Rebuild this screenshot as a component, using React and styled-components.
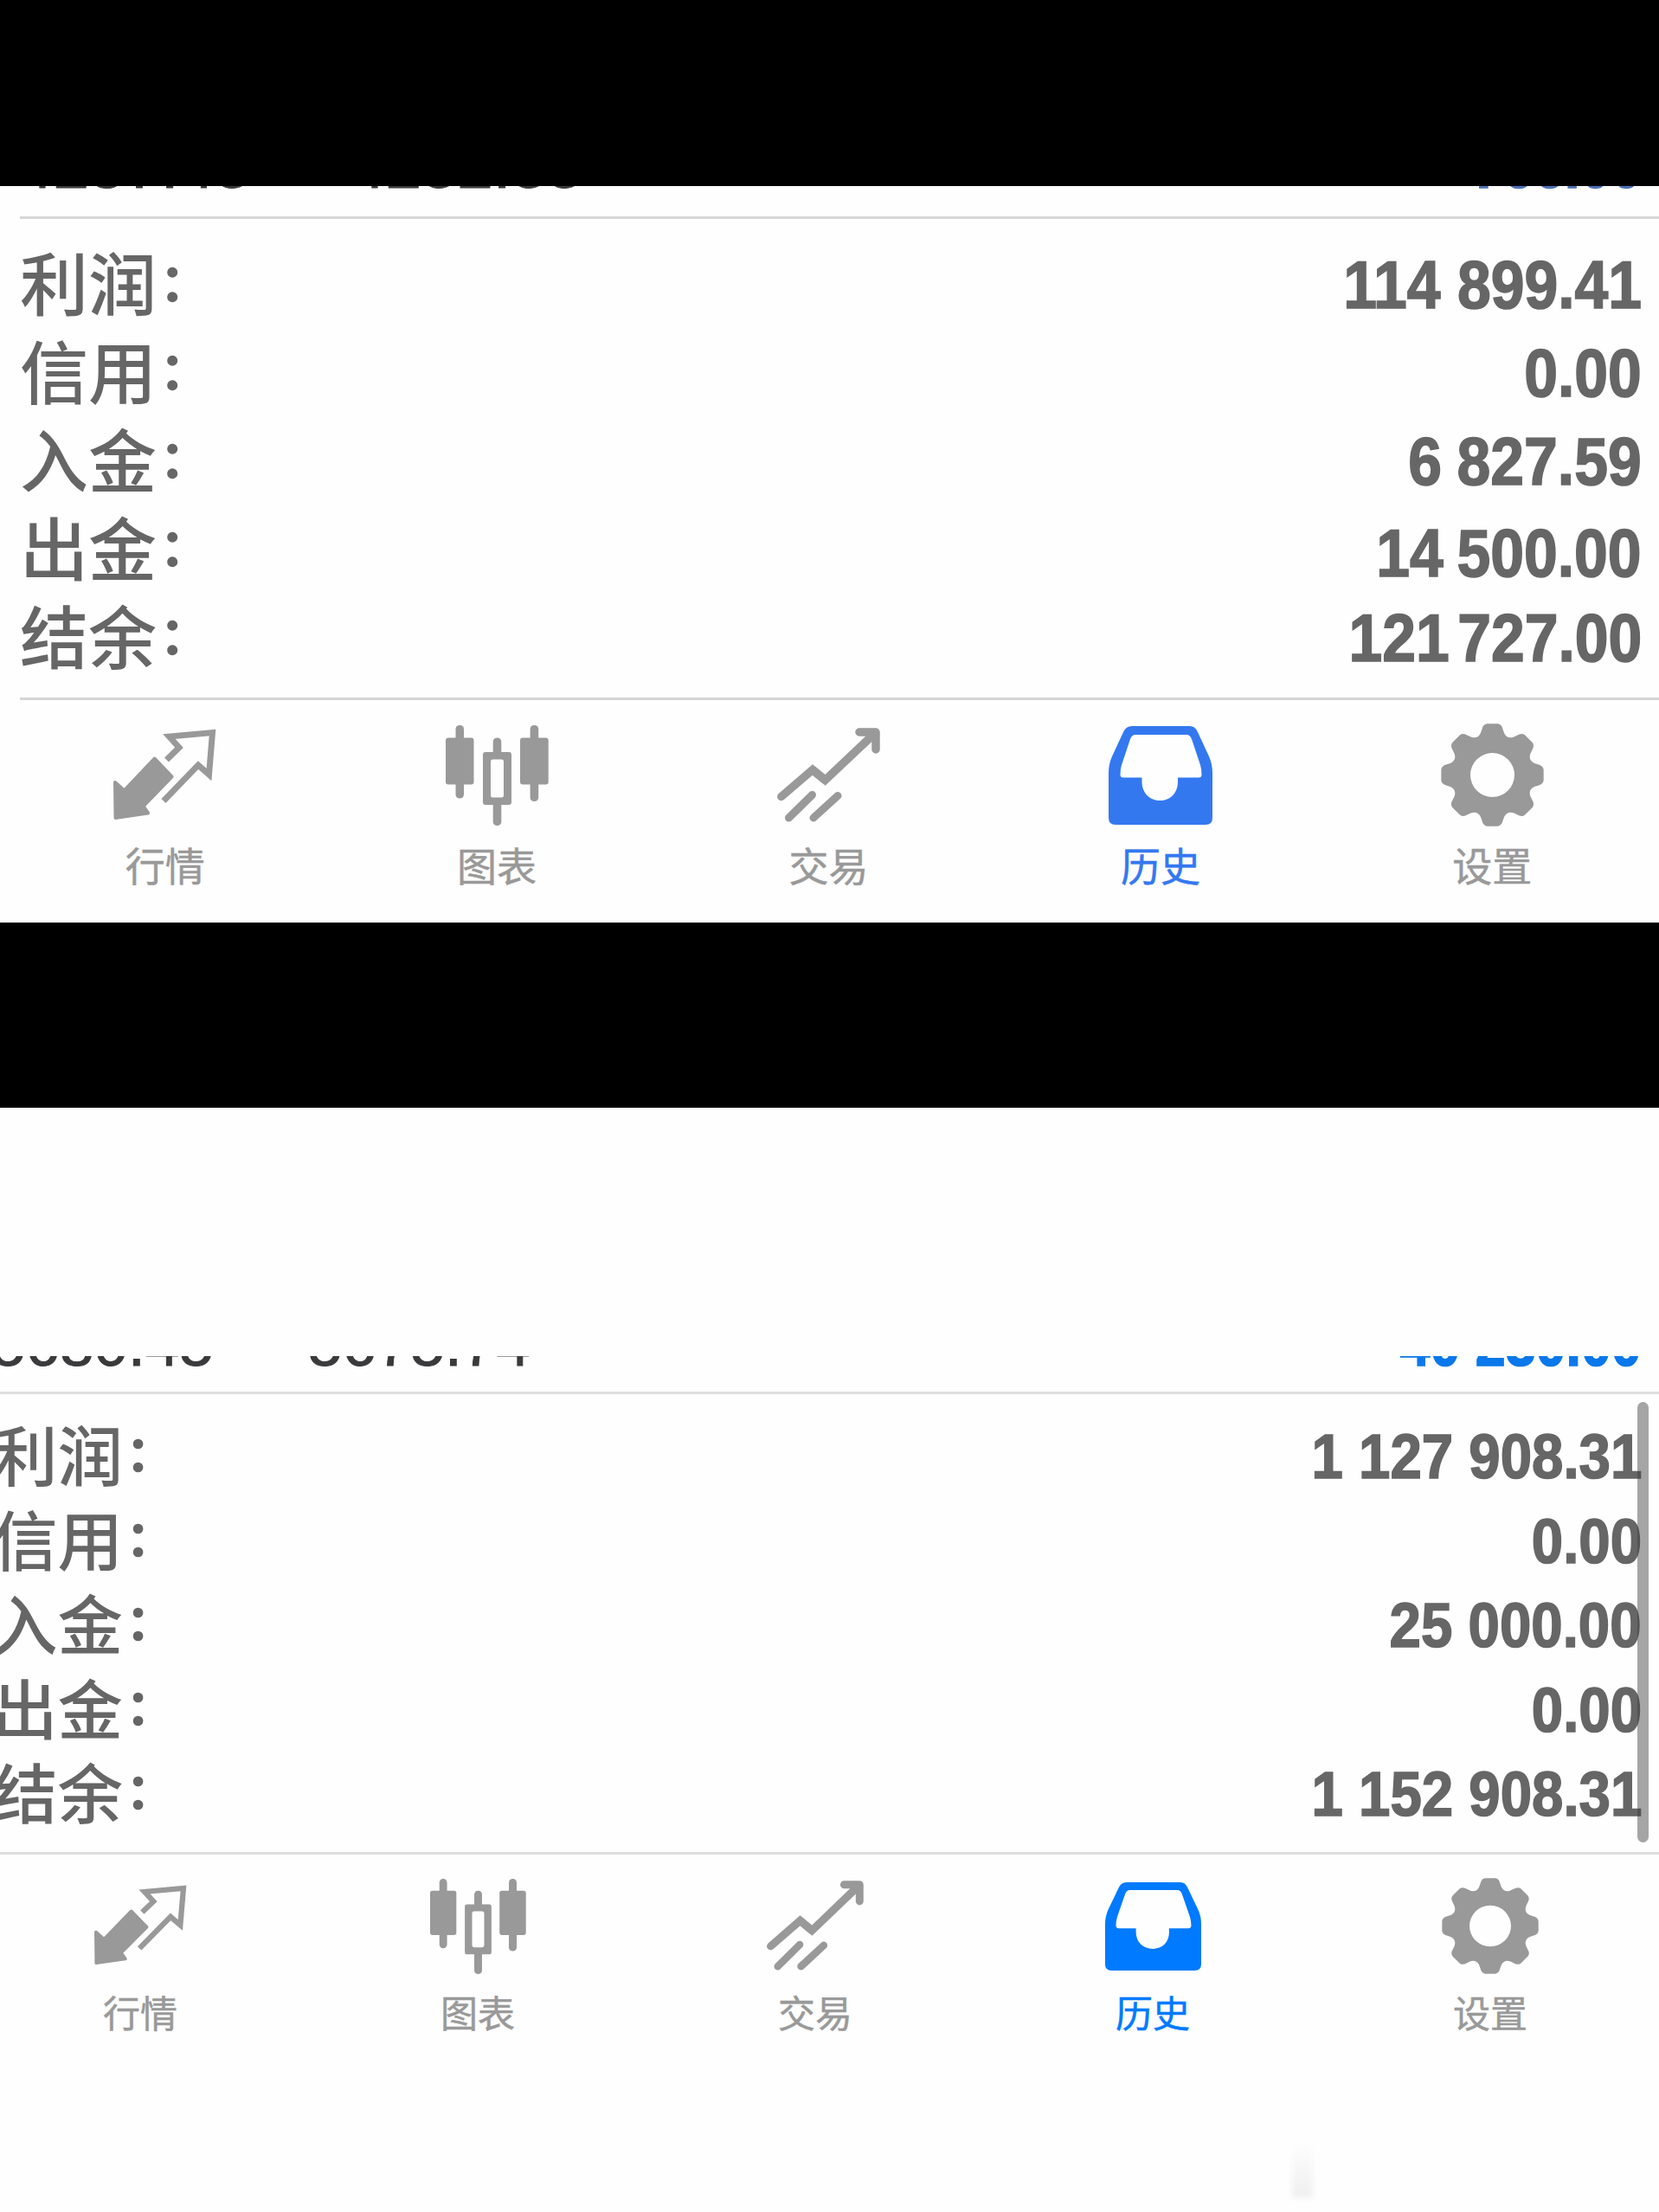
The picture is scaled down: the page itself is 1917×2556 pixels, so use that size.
import React from 'react';
import styled, { createGlobalStyle } from 'styled-components';

const GlobalStyle = createGlobalStyle`
  html, body { margin: 0; padding: 0; background: #000; }
  * { box-sizing: border-box; }
`;

const Page = styled.main`
  width: 1917px;
  height: 2556px;
  overflow: hidden;
  display: flex;
  flex-direction: column;
  background: #000;
  font-family: "Liberation Sans", "Noto Sans CJK SC", sans-serif;
`;

const Bar = styled.div`
  flex: none;
  height: ${(p) => p.$h}px;
  background: #000;
`;

const Panel = styled.section`
  position: relative;
  flex: none;
  height: ${(p) => p.$h}px;
  padding-top: ${(p) => p.$top || 0}px;
  background: #fefefe;
  overflow: hidden;
`;

const Clipped = styled.div`
  height: ${(p) => p.$h}px;
  overflow: hidden;
  display: flex;
  align-items: flex-end;
  justify-content: space-between;
  padding: 0 20px ${(p) => p.$bottom}px 0;
`;

const Prices = styled.div`
  display: flex;
  align-items: flex-end;
  margin-left: ${(p) => p.$left}px;
`;

const Price = styled.span`
  flex: none;
  width: ${(p) => p.$w}px;
  font-size: ${(p) => p.$size}px;
  line-height: 1;
  height: ${(p) => p.$size * 0.846}px;
  display: flex;
  white-space: pre;
  color: #3a3a3c;
  -webkit-text-stroke: 1px #3a3a3c;
`;

const ArrowSlot = styled.span`
  flex: none;
  display: flex;
  width: ${(p) => p.$w}px;
  padding-bottom: 10px;
  color: #3a3a3c;
`;

const Rule = styled.hr`
  height: 3px;
  margin: 0 0 0 ${(p) => p.$left}px;
  border: 0;
  background: ${(p) => p.$color};
`;

const Summary = styled.div`
  display: flex;
  flex-direction: column;
  height: ${(p) => p.$h}px;
  padding: ${(p) => p.$top}px 20px 0 0;
  margin-left: ${(p) => p.$left}px;
`;

const Row = styled.div`
  flex: none;
  display: flex;
  justify-content: space-between;
  height: ${(p) => p.$h}px;
  line-height: ${(p) => p.$h}px;
  color: #666;
`;

const Label = styled.span`
  font-family: "Noto Sans CJK SC", sans-serif;
  font-size: ${(p) => p.$size}px;
  font-weight: 500;
  white-space: nowrap;
`;

const Colon = styled.span`
  display: inline-block;
  margin-left: 4px;
  font-size: 0.72em;
  line-height: 1;
  -webkit-text-stroke: 2.5px #666;
  transform: translateY(-12px);
`;

const Value = styled.span`
  font-size: ${(p) => p.$size}px;
  font-weight: 700;
  white-space: pre;
  color: ${(p) => p.$color || '#666'};
  -webkit-text-stroke: 1.6px ${(p) => p.$color || '#666'};
  word-spacing: ${(p) => p.$ws || 0}px;
  transform: translateY(${(p) => p.$dy || 0}px) scaleX(${(p) => p.$sx});
  transform-origin: right center;
`;

const ClippedValue = styled(Value)`
  line-height: 1;
  height: ${(p) => p.$size * 0.846}px;
`;

const Tabs = styled.nav`
  display: flex;
  width: ${(p) => p.$w}px;
  margin-left: ${(p) => p.$left}px;
`;

const Tab = styled.div`
  flex: 1;
  display: flex;
  flex-direction: column;
  align-items: center;
  color: ${(p) => p.$color};
`;

const IconSlot = styled.div`
  height: ${(p) => p.$h}px;
  display: flex;
  align-items: center;
  justify-content: center;
  padding-bottom: ${(p) => p.$lift || 0}px;
  svg { display: block; overflow: visible; }
`;

const TabLabel = styled.span`
  font-family: "Noto Sans CJK SC", sans-serif;
  font-size: ${(p) => p.$size}px;
  line-height: 60px;
  margin-top: -15px;
  font-weight: 400;
  -webkit-text-stroke: 0.5px currentColor;
`;

const Scrollbar = styled.div`
  position: absolute;
  left: 1892px;
  top: 340px;
  width: 13px;
  height: 509px;
  border-radius: 7px;
  background: rgba(60, 60, 60, 0.46);
`;

const Smudge = styled.div`
  position: absolute;
  left: 1493px;
  top: 1195px;
  width: 24px;
  height: 64px;
  background: linear-gradient(#fefefe, #efefef);
  filter: blur(3px);
`;

const Icon = ({ w, h, vw, vh, children }) => (
  <svg width={w} height={h} viewBox={`0 0 ${vw} ${vh}`} preserveAspectRatio="none" fill="currentColor">
    {children}
  </svg>
);

const line = { fill: 'none', stroke: 'currentColor' };

const QuotesIcon = (p) => (
  <Icon {...p} vw={119} vh={106}>
    <path {...line} strokeWidth="7" strokeLinejoin="miter" d="M61.500 36 L76 21.800 L64.500 9 L114.500 4.500 L110.500 53 L98 42 L58 83.500" />
    <path stroke="currentColor" strokeWidth="4" strokeLinejoin="round" d="M47.500 34.500 L67.500 55.500 L34.500 89.500 L40 97.500 L2.500 103 L2 62 L12.500 71.500 Z" />
  </Icon>
);

const ChartIcon = (p) => (
  <Icon {...p} vw={119} vh={116}>
    <rect x="11.500" y="0" width="9.500" height="84.500" rx="4.500" />
    <rect x="0" y="14.500" width="32.500" height="54" rx="3" />
    <rect x="54.700" y="14.500" width="9.600" height="24" rx="4.500" />
    <rect x="54.700" y="84" width="9.600" height="32" rx="4.500" />
    <path fillRule="evenodd" d="M46 31 H73 Q76 31 76 34 V89 Q76 92 73 92 H46 Q43 92 43 89 V34 Q43 31 46 31 Z M54.500 39.500 Q52 39.500 52 42 V81 Q52 83.500 54.500 83.500 H64.500 Q67 83.500 67 81 V42 Q67 39.500 64.500 39.500 Z" />
    <rect x="97.600" y="0" width="9.600" height="88" rx="4.500" />
    <rect x="86" y="14.500" width="32.700" height="54" rx="3" />
  </Icon>
);

const TradeIcon = (p) => (
  <Icon {...p} vw={119} vh={109}>
    <g {...line} strokeWidth="9.500" strokeLinecap="round">
      <path d="M4.800 79.500 L41 48.500 L55.500 60.500 L111 8" />
      <path strokeLinecap="butt" d="M41 48.500 L55.500 60.500" />
      <path d="M95 5 H114 V25" strokeLinejoin="round" />
      <path d="M40.500 77.500 L13.500 104" strokeWidth="9" />
      <path d="M70 78.500 L42 104" strokeWidth="9" />
    </g>
  </Icon>
);

const HistoryIcon = (p) => (
  <Icon {...p} vw={120} vh={114}>
    <path fillRule="evenodd" d="M27 0 H94 Q100 0 103 7 L116 35 Q120 44 120 54 V106 Q120 114 112 114 H8 Q0 114 0 106 V54 Q0 44 4 35 L17 7 Q20 0 27 0 Z M31 10 Q27 10 25 15 L15 45 Q13.500 50 13.500 56 Q13.500 59.500 17 59.500 H38.500 V64 C38.500 78 48 86 59.500 86 C71 86 80 78 80 64 V59.500 H104 Q107.500 59.500 107.500 56 Q107.500 50 106 45 L96 15 Q94 10 90 10 Z" />
  </Icon>
);

const gearPath = (() => {
  const at = (deg, r) => {
    const t = (deg * Math.PI) / 180;
    return `${(59.5 + r * Math.sin(t)).toFixed(2)} ${(59.5 - r * Math.cos(t)).toFixed(2)}`;
  };
  let d = '';
  for (let i = 0; i < 8; i += 1) {
    const a = i * 45;
    d += `${i ? 'L' : 'M'}${at(a - 13, 54)} Q${at(a - 10.5, 59.5)} ${at(a - 6, 59.5)} L${at(a + 6, 59.5)} Q${at(a + 10.5, 59.5)} ${at(a + 13, 54)} L${at(a + 16, 50)} Q${at(a + 22.5, 45)} ${at(a + 29, 50)} `;
  }
  return `${d}Z M34 59.500 a25.500 25.500 0 1 0 51 0 a25.500 25.500 0 1 0 -51 0 Z`;
})();

const SettingsIcon = (p) => (
  <Icon {...p} vw={119} vh={119}>
    <path fillRule="evenodd" d={gearPath} />
  </Icon>
);

const PriceArrow = () => (
  <svg width="50" height="34" viewBox="0 0 50 34" fill="none" stroke="currentColor" strokeWidth="4">
    <path d="M4 17 H46 M36 2 L47 17 L36 32" />
  </svg>
);

const TABS = [
  { name: '行情', Glyph: QuotesIcon, lift: 3 },
  { name: '图表', Glyph: ChartIcon },
  { name: '交易', Glyph: TradeIcon, lift: 2 },
  { name: '历史', Glyph: HistoryIcon, active: true },
  { name: '设置', Glyph: SettingsIcon, lift: 1 },
];

function TabBar({ width, left, iconSizes, slot, labelSize, active }) {
  return (
    <Tabs $w={width} $left={left}>
      {TABS.map(({ name, Glyph, lift, active: on }, i) => (
        <Tab key={name} $color={on ? active : '#999'}>
          <IconSlot $h={slot} $lift={lift}>
            <Glyph w={iconSizes[i][0]} h={iconSizes[i][1]} />
          </IconSlot>
          <TabLabel $size={labelSize}>{name}</TabLabel>
        </Tab>
      ))}
    </Tabs>
  );
}

function SummaryRows({ rows, h, labelSize, valueSize, sx, baseDy }) {
  return rows.map(([label, value, dy = 0, ws = 0]) => (
    <Row key={label} $h={h}>
      <Label $size={labelSize}>
        {label}
        <Colon>：</Colon>
      </Label>
      <Value $size={valueSize} $sx={sx} $dy={baseDy + dy} $ws={ws}>{value}</Value>
    </Row>
  ));
}

const FIRST = [
  ['利润', '114 899.41'],
  ['信用', '0.00'],
  ['入金', '6 827.59', 0, -2],
  ['出金', '14 500.00', 4, -4],
  ['结余', '121 727.00', 0, -11],
];

const SECOND = [
  ['利润', '1 127 908.31'],
  ['信用', '0.00'],
  ['入金', '25 000.00'],
  ['出金', '0.00'],
  ['结余', '1 152 908.31'],
];

export default function App() {
  return (
    <Page>
      <GlobalStyle />
      <Bar $h={215} />
      <Panel $h={851}>
        <Clipped $h={35} $bottom={32}>
          <Prices $left={20}>
            <Price $size={74.5} $w={384}>4237.48</Price>
            <Price $size={74.5} $w={384}>4282.88</Price>
          </Prices>
          <ClippedValue $size={74} $sx={0.87} $color="#4a72b8">766.00</ClippedValue>
        </Clipped>
        <Rule $left={23} $color="#d6d6d6" />
        <Summary $h={553} $top={21} $left={23}>
          <SummaryRows rows={FIRST} h={102} labelSize={79} valueSize={77} sx={0.905} baseDy={4} />
        </Summary>
        <Rule $left={23} $color="#d6d6d6" />
        <TabBar
          width={1917}
          left={-1}
          slot={174}
          labelSize={46}
          active="#3478f0"
          iconSizes={[[119, 106], [119, 116], [119, 109], [120, 114], [119, 119]]}
        />
      </Panel>
      <Bar $h={214} />
      <Panel $h={1276} $top={287}>
        <Clipped $h={41} $bottom={30}>
          <Prices $left={-10}>
            <Price $size={71} $w={290}>5680.45</Price>
            <ArrowSlot $w={76}><PriceArrow /></ArrowSlot>
            <Price $size={71} $w={290}>5675.74</Price>
          </Prices>
          <ClippedValue $size={73} $sx={0.86} $color="#0a78ea">40 230.00</ClippedValue>
        </Clipped>
        <Rule $left={0} $color="#dedede" />
        <Summary $h={529} $top={19} $left={-9}>
          <SummaryRows rows={SECOND} h={97.5} labelSize={75.5} valueSize={72.5} sx={0.902} baseDy={4} />
        </Summary>
        <Rule $left={0} $color="#dedede" />
        <TabBar
          width={1950}
          left={-33}
          slot={166}
          labelSize={43}
          active="#007aff"
          iconSizes={[[107, 93], [111, 110], [112, 104], [111, 102], [112, 111]]}
        />
        <Scrollbar />
        <Smudge />
      </Panel>
    </Page>
  );
}
